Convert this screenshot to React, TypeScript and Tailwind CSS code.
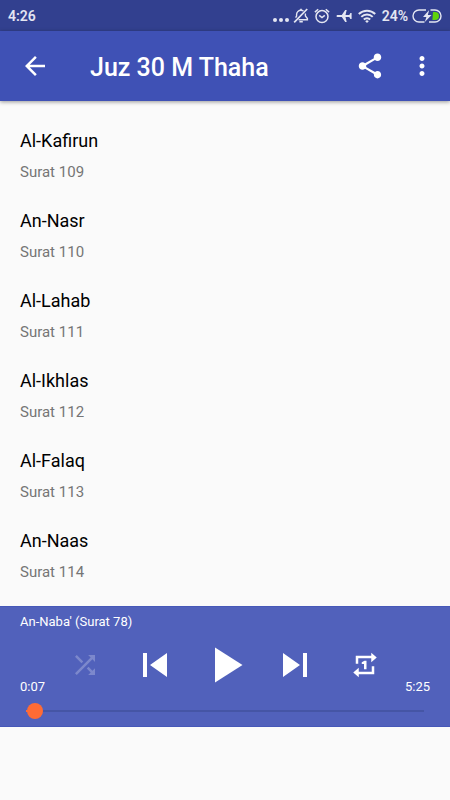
import { useState } from "react";
import {
  MdArrowBack,
  MdMoreVert,
  MdPlayArrow,
  MdShare,
  MdShuffle,
  MdSkipNext,
  MdSkipPrevious,
} from "react-icons/md";

const surahs = [
  { number: 109, name: "Al-Kafirun" },
  { number: 110, name: "An-Nasr" },
  { number: 111, name: "Al-Lahab" },
  { number: 112, name: "Al-Ikhlas" },
  { number: 113, name: "Al-Falaq" },
  { number: 114, name: "An-Naas" },
];

const duration = 325;

const formatTime = (s: number) => `${Math.floor(s / 60)}:${String(s % 60).padStart(2, "0")}`;

function StatusBar() {
  return (
    <div className="flex h-[31px] items-center justify-between bg-[#32408f] pr-2 pl-2 text-sm font-semibold text-[#e4e6f2]">
      <span>4:26</span>
      <div className="flex items-center">
        <svg width="16" height="16" viewBox="0 0 16 16" fill="currentColor" aria-hidden="true">
          <circle cx="2" cy="12" r="2" />
          <circle cx="8" cy="12" r="2" />
          <circle cx="14" cy="12" r="2" />
        </svg>
        {/* muted bell */}
        <svg className="ml-1" width="16" height="16" viewBox="0 0 16 16" fill="none" stroke="currentColor" strokeWidth="1.4" aria-hidden="true">
          <path d="M2.6 9.6 3.6 8V6.4A4.4 4.4 0 0 1 8 2.2c1 0 1.8.3 2.5.8M12.4 5.6V8l2 2.6v1.2H5.6" />
          <path d="M6.4 13.8h3.4M7.2 1.6h1.6" strokeWidth="1.6" />
          <path d="M14.2 1 1.2 14.4" strokeWidth="1.7" />
        </svg>
        <svg className="ml-[5px]" width="16" height="16" viewBox="0 0 16 16" fill="none" stroke="currentColor" strokeWidth="1.5" aria-hidden="true">
          <circle cx="8" cy="8.6" r="6" />
          <path d="M.9 4.1 4.2 1.2M15.1 4.1l-3.3-2.9M5.2 7.4 8 9.6l2.8-2.2" />
        </svg>
        <svg className="ml-[6px]" width="16" height="16" viewBox="0 0 16 16" fill="currentColor" aria-hidden="true">
          <path d="M.5 8c0-.7.6-1.1 1.3-1.1h4L9.2 2h1.5L9.5 6.9h3.8L14.4 5h1.2v6h-1.2l-1.1-1.9H9.5l1.2 4.9H9.2L5.8 9.1h-4C1.1 9.1.5 8.7.5 8z" />
        </svg>
        <svg className="ml-[6px]" width="18" height="14" viewBox="0 0 18 14" fill="none" stroke="currentColor" strokeWidth="2" aria-hidden="true">
          <path d="M.8 5a11.8 11.8 0 0 1 16.4 0M3.3 7.9a8.2 8.2 0 0 1 11.4 0M5.8 10.6a4.7 4.7 0 0 1 6.4 0" />
          <path d="M9 14 7.2 12.2a2.6 2.6 0 0 1 3.6 0z" fill="currentColor" stroke="none" />
        </svg>
        <span className="ml-[6px]">24%</span>
        {/* battery, charging */}
        <svg className="ml-1" width="30" height="14" viewBox="0 0 30 14" aria-hidden="true">
          <path d="M14 1H7a6 6 0 0 0 0 12h5.5M18.5 1H23a6 6 0 0 1 0 12h-6" fill="none" stroke="currentColor" strokeWidth="1.4" />
          <path d="M21 3h2a4 4 0 0 1 0 8h-2.6z" fill="#5fd30a" />
          <path d="M17.2 1 11 8h3.4l-1.6 5L19.6 6h-3.8z" fill="currentColor" />
        </svg>
      </div>
    </div>
  );
}

function AppBar() {
  return (
    <header className="relative flex h-[70px] items-center bg-[#3f51b5] pr-[13px] pl-5 text-white shadow-[0_1px_4px_rgba(0,0,0,0.4)]">
      <button type="button" aria-label="Back">
        <MdArrowBack size={30} />
      </button>
      <h1 className="ml-10 flex-1 pt-1 text-[25px] leading-8 font-medium">Juz 30 M Thaha</h1>
      <button type="button" aria-label="Share" className="mr-[22px]">
        <MdShare size={30} />
      </button>
      <button type="button" aria-label="More options">
        <MdMoreVert size={30} />
      </button>
    </header>
  );
}

function RepeatOneIcon() {
  return (
    <svg width="30" height="30" viewBox="0 0 24 24" fill="currentColor" aria-hidden="true">
      <path d="M6.6 6.6H17v3.2L21.4 6 17 2.2v2.4H4.6V11h2zM17.4 17.4H7v-3.2L2.6 18 7 21.8v-2.4h12.4V13h-2z" />
      <path d="M13.2 15.4V8.6h-1.6l-2.2 1.2v1.4h1.8v4.2z" />
    </svg>
  );
}

function Player() {
  const [position, setPosition] = useState(7);
  const played = `${(position / duration) * 100}%`;

  return (
    <section className="border-y border-y-[#3f51b5]/60 bg-[#5161bb] pt-[5px] pb-[7px] text-[13px] leading-5 text-white" aria-label="Player">
      <p className="px-5">An-Naba' (Surat 78)</p>
      <div className="flex h-[66px] items-center justify-center">
        <button type="button" aria-label="Shuffle" className="flex w-[70px] justify-center text-white/25">
          <MdShuffle size={30} />
        </button>
        <button type="button" aria-label="Previous" className="flex w-[70px] justify-center">
          <MdSkipPrevious size={48} />
        </button>
        <button type="button" aria-label="Play" className="flex w-[70px] justify-center">
          <MdPlayArrow size={60} />
        </button>
        <button type="button" aria-label="Next" className="flex w-[70px] justify-center">
          <MdSkipNext size={48} />
        </button>
        <button type="button" aria-label="Repeat one" className="flex w-[70px] justify-center">
          <RepeatOneIcon />
        </button>
      </div>
      <div className="-mt-[21px] flex justify-between px-5">
        <span>{formatTime(position)}</span>
        <span>{formatTime(duration)}</span>
      </div>
      <div className="mt-[6px] flex px-[18px]">
        <input
          type="range"
          aria-label="Seek"
          min={0}
          max={duration}
          value={position}
          onChange={(e) => setPosition(Number(e.target.value))}
          className="h-4 w-full appearance-none bg-[length:calc(100%-16px)_2px] bg-center bg-no-repeat [&::-webkit-slider-thumb]:size-4 [&::-webkit-slider-thumb]:appearance-none [&::-webkit-slider-thumb]:rounded-full [&::-webkit-slider-thumb]:bg-[#ff6b35]"
          style={{ backgroundImage: `linear-gradient(to right, #ff6b35 ${played}, #4555a5 ${played})` }}
        />
      </div>
    </section>
  );
}

export default function App() {
  return (
    <div className="flex min-h-screen flex-col bg-[#fafafa] pb-[73px] font-[Roboto,sans-serif]">
      <StatusBar />
      <AppBar />
      <main className="flex-1 pt-[15px]">
        <ul>
          {surahs.map((surah) => (
            <li key={surah.number} className="px-5 py-[13px]">
              <p className="text-lg leading-6 text-black">{surah.name}</p>
              <p className="mt-2 text-[15px] leading-[22px] text-[#757575]">Surat {surah.number}</p>
            </li>
          ))}
        </ul>
      </main>
      <Player />
    </div>
  );
}
